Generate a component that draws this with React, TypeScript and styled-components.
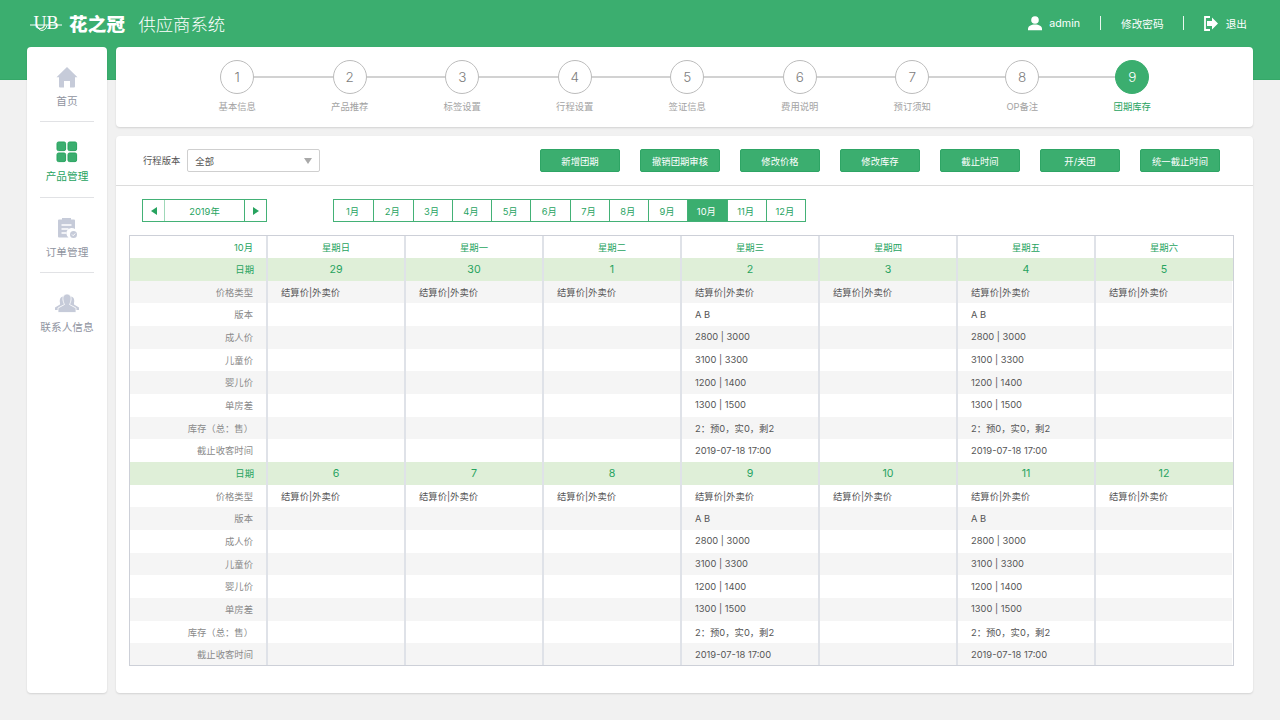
import React from 'react';
import styled, { createGlobalStyle } from 'styled-components';

const green = '#3bae6f';
const deep = '#27a35f';
const GlobalStyle = createGlobalStyle`
  html, body { margin: 0; padding: 0; background: #f1f1f1; }
  body { font-family: Inter, "Noto Sans CJK SC", sans-serif; width: 1280px; height: 720px; overflow: hidden; }
  * { box-sizing: border-box; }
`;

const Page = styled.div`
  position: relative;
  width: 1280px;
  height: 720px;
`;
const Header = styled.header`
  height: 80px;
  background: ${green};
  border-bottom: 1px solid #35a868;
  padding: 0 33px 33px 30px;
  display: flex;
  align-items: center;
  color: #fff;
`;
const Logo = styled.svg`
  width: 32px;
  height: 26px;
  margin-right: 7px;
  flex: none;
`;
const Brand = styled.span`
  font-size: 18.5px;
  font-weight: 900;
  letter-spacing: 0.3px;
  margin-right: 13px;
`;
const SystemName = styled.span`
  font-size: 17.33px;
  font-weight: 300;
`;
const HeaderRight = styled.div`
  margin-left: auto;
  display: flex;
  align-items: center;
  font-size: 10.67px;
`;
const HeaderItem = styled.div<{ $wide?: boolean }>`
  display: flex;
  align-items: center;
  gap: ${(p) => (p.$wide ? '8px' : '7px')};
`;
const HeaderSep = styled.i<{ $tight?: boolean }>`
  width: 1px;
  height: 14px;
  background: #e9f7ef;
  margin: 0 20px 0 ${(p) => (p.$tight ? '19px' : '20px')};
`;
const Body = styled.div`
  position: absolute;
  left: 27px;
  top: 47px;
  display: flex;
  gap: 9px;
  width: 1226px;
  height: 646px;
`;
const Card = styled.div`
  background: #fff;
  border-radius: 4px;
  box-shadow: 0 1px 2px rgba(0, 0, 0, 0.13);
`;
const Side = styled(Card)`
  width: 80px;
  padding: 0 13px;
  display: flex;
  flex-direction: column;
`;
const NavItem = styled.div<{ $on?: boolean }>`
  height: 75.4px;
  border-bottom: 1px solid #e1e2e5;
  padding-top: 19px;
  display: flex;
  flex-direction: column;
  align-items: center;
  gap: 7px;
  font-size: 10.67px;
  line-height: 14px;
  color: ${(p) => (p.$on ? deep : '#90949f')};
  svg { width: 22px; height: 22px; flex: none; }
  &:last-child { border-bottom: 0; }
`;
const Main = styled.div`
  flex: 1;
  display: flex;
  flex-direction: column;
  gap: 9px;
`;
const StepsCard = styled(Card)`
  height: 80px;
  padding-top: 13px;
  padding-left: 65px;
  display: flex;
`;
const Step = styled.div<{ $tight?: boolean }>`
  position: relative;
  width: 112.5px;
  margin-left: ${(p) => (p.$tight ? '-2.5px' : '0')};
  display: flex;
  flex-direction: column;
  align-items: center;
  gap: 6px;
`;
const StepCircle = styled.div<{ $on?: boolean }>`
  width: 34px;
  height: 34px;
  border-radius: 50%;
  border: 1px solid ${(p) => (p.$on ? green : '#bcbcbc')};
  background: ${(p) => (p.$on ? green : '#fff')};
  color: ${(p) => (p.$on ? '#fff' : '#7d7d7d')};
  font-size: 13.5px;
  font-weight: 300;
  display: flex;
  align-items: center;
  justify-content: center;
  position: relative;
  z-index: 1;
`;
const StepLine = styled.i`
  position: absolute;
  left: 50%;
  top: 16px;
  width: 112.5px;
  height: 2px;
  background: #d2d2d2;
`;
const StepLabel = styled.div<{ $on?: boolean }>`
  font-size: 9.33px;
  line-height: 14px;
  color: ${(p) => (p.$on ? deep : '#a3a3a3')};
`;
const ContentCard = styled(Card)`
  flex: 1;
  display: flex;
  flex-direction: column;
`;
const Toolbar = styled.div`
  height: 50px;
  border-bottom: 1px solid #dcdcdc;
  padding: 13px 33px 0 27px;
  display: flex;
  align-items: flex-start;
`;
const SelectLabel = styled.span`
  font-size: 9.33px;
  line-height: 23px;
  color: #555;
  margin-right: 7px;
`;
const Select = styled.div`
  width: 133px;
  height: 23px;
  border: 1px solid #cfcfcf;
  border-radius: 2px;
  padding: 0 7px 0 7px;
  display: flex;
  align-items: center;
  justify-content: space-between;
  font-size: 9.33px;
  color: #555;
`;
const Caret = styled.i`
  width: 0;
  height: 0;
  border-left: 4.5px solid transparent;
  border-right: 4.5px solid transparent;
  border-top: 6px solid #a9a9a9;
`;
const Actions = styled.div`
  margin-left: auto;
  display: flex;
  gap: 20px;
`;
const ActionButton = styled.div`
  width: 80px;
  height: 23px;
  background: ${green};
  border: 1px solid #2ea565;
  border-radius: 2px;
  color: #fff;
  font-size: 9.33px;
  display: flex;
  align-items: center;
  justify-content: center;
`;
const CalBar = styled.div`
  padding: 13px 0 0 26px;
  display: flex;
  align-items: flex-start;
`;
const YearNav = styled.div`
  width: 125px;
  height: 23px;
  display: flex;
  border: 1px solid #43b176;
  margin-right: 66px;
  color: ${deep};
  font-size: 9.33px;
`;
const NavArrow = styled.div`
  width: 22px;
  display: flex;
  align-items: center;
  justify-content: center;
  &:first-child { border-right: 1px solid #9fd8b8; }
  &:last-child { border-left: 1px solid #43b176; }
`;
const Arrow = styled.i<{ $left?: boolean }>`
  width: 0;
  height: 0;
  border-top: 4.5px solid transparent;
  border-bottom: 4.5px solid transparent;
  ${(p) => (p.$left ? `border-right: 6px solid ${deep};` : `border-left: 6px solid ${deep};`)}
`;
const YearText = styled.div`
  flex: 1;
  display: flex;
  align-items: center;
  justify-content: center;
`;
const Months = styled.div`
  display: flex;
  height: 23px;
  border: 1px solid #43b176;
`;
const Month = styled.div<{ $on?: boolean }>`
  width: 39.25px;
  border-left: 1px solid #43b176;
  padding-right: 2px;
  display: flex;
  align-items: center;
  justify-content: center;
  font-size: 9.33px;
  color: ${(p) => (p.$on ? '#fff' : deep)};
  background: ${(p) => (p.$on ? green : '#fff')};
  &:first-child { border-left: 0; }
`;
const Grid = styled.div`
  margin: 13px 0 0 13px;
  width: 1105px;
  height: 431px;
  overflow: hidden;
  border: 1px solid #cdd0d8;
  display: grid;
  grid-template-columns: 137px repeat(7, 138px);
  grid-template-rows: 22px;
  grid-auto-rows: 22.68px;
`;
const Cell = styled.div<{ $kind: 'head' | 'date' | 'odd' | 'even' }>`
  position: relative;
  display: flex;
  align-items: center;
  font-size: 9.33px;
  padding-bottom: ${(p) => (p.$kind === 'date' ? '0' : '1px')};
  background: ${(p) => (p.$kind === 'date' ? '#dfefd8' : p.$kind === 'even' ? '#f5f5f5' : '#fff')};
  background-clip: padding-box;
  border: solid transparent;
  border-width: 0 ${(p) => (p.$kind === 'date' ? '0' : '1px')};
  &:before {
    content: '';
    position: absolute;
    left: ${(p) => (p.$kind === 'date' ? '-1px' : '-2px')};
    top: 0;
    bottom: 0;
    width: 2px;
    background: #dfe2e8;
  }
`;
const LabelCell = styled(Cell)`
  justify-content: flex-end;
  padding-right: 13px;
  background-clip: border-box;
  color: ${(p) => (p.$kind === 'date' || p.$kind === 'head' ? deep : '#8a8a8a')};
  &:before { display: none; }
`;
const HeadCell = styled(Cell)`
  justify-content: center;
  color: ${deep};
`;
const DateCell = styled(Cell)`
  justify-content: center;
  color: ${deep};
  font-size: 10.67px;
`;
const DataCell = styled(Cell)`
  color: #555;
  span { margin-left: 13px; white-space: nowrap; }
`;

const steps = ['基本信息', '产品推荐', '标签设置', '行程设置', '签证信息', '费用说明', '预订须知', 'OP备注', '团期库存'];
const actions = ['新增团期', '撤销团期审核', '修改价格', '修改库存', '截止时间', '开/关团', '统一截止时间'];
const months = Array.from({ length: 12 }, (_, i) => `${i + 1}月`);
const weekdays = ['星期日', '星期一', '星期二', '星期三', '星期四', '星期五', '星期六'];
const labels = ['价格类型', '版本', '成人价', '儿童价', '婴儿价', '单房差', '库存（总：售）', '截止收客时间'];
const details = ['结算价|外卖价', 'A B', '2800 | 3000', '3100 | 3300', '1200 | 1400', '1300 | 1500', '2：预0，实0，剩2', '2019-07-18 17:00'];
const weeks = [
  [29, 30, 1, 2, 3, 4, 5],
  [6, 7, 8, 9, 10, 11, 12],
];

const HomeIcon = () => (
  <svg viewBox="0 0 22 22"><path fill="#c6cbd9" d="M11 1 21.5 11.2H19V20.5a1 1 0 0 1-1 1H14v-6.5H8v6.5H4a1 1 0 0 1-1-1V11.2H.5Z" /></svg>
);
const GridIcon = () => (
  <svg viewBox="0 0 22 22">
    <rect x="1" y="1" width="8.6" height="8.6" rx="1.5" fill={green} stroke={deep} />
    <rect x="12" y="1" width="8.6" height="8.6" rx="1.5" fill={green} stroke={deep} />
    <rect x="1" y="12" width="8.6" height="8.6" rx="1.5" fill={green} stroke={deep} />
    <rect x="12" y="12" width="8.6" height="8.6" rx="1.5" fill={green} stroke={deep} />
  </svg>
);
const OrderIcon = () => (
  <svg viewBox="0 0 22 22">
    <path fill="#c6cbd9" d="M3 2.5h3V1h9v1.500h3a1 1 0 0 1 1 1V12a5 5 0 0 0-6.500 8.500H3a1 1 0 0 1-1-1V3.500a1 1 0 0 1 1-1Z" />
    <path stroke="#fff" strokeWidth="1.500" d="M5.500 8h10M5.500 12h7M5.500 16h5" />
    <circle cx="17.500" cy="17.500" r="3.500" fill="#c6cbd9" />
    <path stroke="#fff" fill="none" d="m16 17.500 1.200 1.200 2-2.200" />
  </svg>
);
const PeopleIcon = () => (
  <svg viewBox="0 0 24 22" style={{ width: 24 }}>
    <path fill="#c6cbd9" d="M5.500 6a3 3 0 0 1 3-1.500V10l1.500 2.500-6 3 -.5 2.500H0v-2.500L5 12.500V11C4.500 9 4.800 7 5.500 6ZM18.500 6a3 3 0 0 0-3-1.500V10L14 12.500l6 3 .5 2.500H24v-2.500L19 12.500V11c.5-2 .2-4-.5-5Z" />
    <path fill="#c6cbd9" d="M12 2c3 0 4.500 2.500 4 6-.3 2-1 3.500-1.500 4.500L21 16v4.500H3V16l6.500-3.500C9 11.500 8.300 10 8 8c-.5-3.500 1-6 4-6Z" stroke="#fff" strokeWidth=".8" />
  </svg>
);
const UserIcon = () => (
  <svg viewBox="0 0 14 15" width="14" height="15"><circle cx="7" cy="4" r="3.800" fill="#fff" /><path fill="#fff" d="M0 13c0-3 3-4.500 7-4.500s7 1.500 7 4.500v1.200H0Z" /></svg>
);
const ExitIcon = () => (
  <svg viewBox="0 0 14 15" width="14" height="15">
    <path fill="none" stroke="#fff" strokeWidth="1.800" d="M6 1H1v13h5" />
    <path fill="#fff" d="M3 5h5V1.500L14 7.500 8 13.500V10H3Z" />
  </svg>
);
const LogoMark = () => (
  <Logo viewBox="0 0 32 26">
    <text x="3.500" y="19" fontFamily='"Liberation Serif", serif' fontSize="19" textLength="25" lengthAdjust="spacingAndGlyphs" fill="#fff">UB</text>
    <path d="M0 15h32" stroke="#fff" strokeWidth="1" />
    <path d="M7 15.500c2 6.500 8 6.500 10 0" fill="none" stroke="#fff" strokeWidth="1" />
  </Logo>
);

export default function App() {
  return (
    <Page>
      <GlobalStyle />
      <Header>
        <LogoMark />
        <Brand>花之冠</Brand>
        <SystemName>供应商系统</SystemName>
        <HeaderRight>
          <HeaderItem><UserIcon />admin</HeaderItem>
          <HeaderSep />
          <HeaderItem>修改密码</HeaderItem>
          <HeaderSep $tight />
          <HeaderItem $wide><ExitIcon />退出</HeaderItem>
        </HeaderRight>
      </Header>
      <Body>
        <Side>
          <NavItem><HomeIcon />首页</NavItem>
          <NavItem $on><GridIcon />产品管理</NavItem>
          <NavItem><OrderIcon />订单管理</NavItem>
          <NavItem><PeopleIcon />联系人信息</NavItem>
        </Side>
        <Main>
          <StepsCard>
            {steps.map((s, i) => (
              <Step key={s} $tight={i >= 7}>
                {i < 8 && <StepLine />}
                <StepCircle $on={i === 8}>{i + 1}</StepCircle>
                <StepLabel $on={i === 8}>{s}</StepLabel>
              </Step>
            ))}
          </StepsCard>
          <ContentCard>
            <Toolbar>
              <SelectLabel>行程版本</SelectLabel>
              <Select>全部<Caret /></Select>
              <Actions>
                {actions.map((a) => <ActionButton key={a}>{a}</ActionButton>)}
              </Actions>
            </Toolbar>
            <CalBar>
              <YearNav>
                <NavArrow><Arrow $left /></NavArrow>
                <YearText>2019年</YearText>
                <NavArrow><Arrow /></NavArrow>
              </YearNav>
              <Months>
                {months.map((m) => <Month key={m} $on={m === '10月'}>{m}</Month>)}
              </Months>
            </CalBar>
            <Grid>
              <LabelCell $kind="head">10月</LabelCell>
              {weekdays.map((d) => <HeadCell key={d} $kind="head">{d}</HeadCell>)}
              {weeks.map((week, w) => (
                <React.Fragment key={w}>
                  <LabelCell $kind="date">日期</LabelCell>
                  {week.map((d) => <DateCell key={d} $kind="date">{d}</DateCell>)}
                  {labels.map((label, r) => {
                    const kind = (r + w) % 2 === 0 ? 'even' : 'odd';
                    return (
                      <React.Fragment key={label}>
                        <LabelCell $kind={kind}>{label}</LabelCell>
                        {week.map((_, c) => (
                          <DataCell key={c} $kind={kind}>
                            {(r === 0 || c === 3 || c === 5) && <span>{details[r]}</span>}
                          </DataCell>
                        ))}
                      </React.Fragment>
                    );
                  })}
                </React.Fragment>
              ))}
            </Grid>
          </ContentCard>
        </Main>
      </Body>
    </Page>
  );
}
